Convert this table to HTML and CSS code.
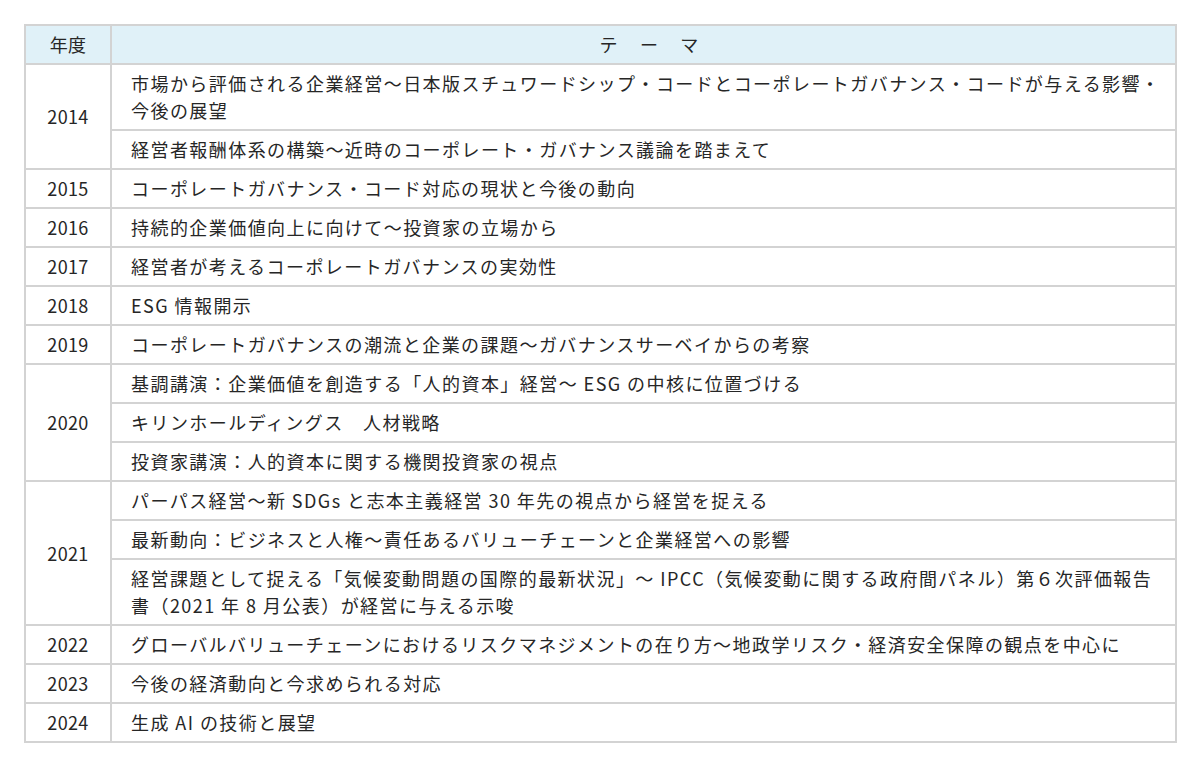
FILE: index.html
```html
<!DOCTYPE html>
<html lang="ja">
<head>
<meta charset="utf-8">
<title>テーマ一覧</title>
<link rel="stylesheet" href="styles.css">
</head>
<body>
<div class="wrap">
<table class="themes">
<thead>
<tr><th class="year">年度</th><th class="theme">テ　ー　マ</th></tr>
</thead>
<tbody>
<tr><td class="year" rowspan="2">2014</td><td>市場から評価される企業経営～日本版スチュワードシップ・コードとコーポレートガバナンス・コードが与える影響・今後の展望</td></tr>
<tr><td>経営者報酬体系の構築～近時のコーポレート・ガバナンス議論を踏まえて</td></tr>
<tr><td class="year">2015</td><td>コーポレートガバナンス・コード対応の現状と今後の動向</td></tr>
<tr><td class="year">2016</td><td>持続的企業価値向上に向けて～投資家の立場から</td></tr>
<tr><td class="year">2017</td><td>経営者が考えるコーポレートガバナンスの実効性</td></tr>
<tr><td class="year">2018</td><td>ESG 情報開示</td></tr>
<tr><td class="year">2019</td><td>コーポレートガバナンスの潮流と企業の課題～ガバナンスサーベイからの考察</td></tr>
<tr><td class="year" rowspan="3">2020</td><td>基調講演：企業価値を創造する「人的資本」経営～ ESG の中核に位置づける</td></tr>
<tr><td>キリンホールディングス　人材戦略</td></tr>
<tr><td>投資家講演：人的資本に関する機関投資家の視点</td></tr>
<tr><td class="year" rowspan="3">2021</td><td>パーパス経営～新 SDGs と志本主義経営 30 年先の視点から経営を捉える</td></tr>
<tr><td>最新動向：ビジネスと人権～責任あるバリューチェーンと企業経営への影響</td></tr>
<tr><td>経営課題として捉える「気候変動問題の国際的最新状況」～ IPCC（気候変動に関する政府間パネル）第６次評価報告書（2021 年 8 月公表）が経営に与える示唆</td></tr>
<tr><td class="year">2022</td><td>グローバルバリューチェーンにおけるリスクマネジメントの在り方～地政学リスク・経済安全保障の観点を中心に</td></tr>
<tr><td class="year">2023</td><td>今後の経済動向と今求められる対応</td></tr>
<tr><td class="year">2024</td><td>生成 AI の技術と展望</td></tr>
</tbody>
</table>
</div>
</body>
</html>
```

FILE: styles.css
```css
html, body {
  margin: 0;
  padding: 0;
  background: #ffffff;
}

body {
  font-family: "Noto Sans CJK JP", "Noto Sans", sans-serif;
  color: #262626;
}

.wrap {
  padding: 24px 23px 24px 24px;
}

.themes {
  width: 100%;
  border-collapse: collapse;
  font-size: 18px;
  line-height: 27px;
  letter-spacing: 0.08em;
}

.themes th,
.themes td {
  border: 2px solid #d3d3d3;
  padding: 5px 6px 5px 19px;
  text-align: left;
  font-weight: 400;
  vertical-align: middle;
}

.themes thead th {
  background: #e0f1f8;
  text-align: center;
}

.themes .year {
  width: 86px;
  padding-left: 0;
  padding-right: 0;
  text-align: center;
  letter-spacing: 0.02em;
  box-sizing: border-box;
}

.themes .theme {
  letter-spacing: 0.12em;
}
```
